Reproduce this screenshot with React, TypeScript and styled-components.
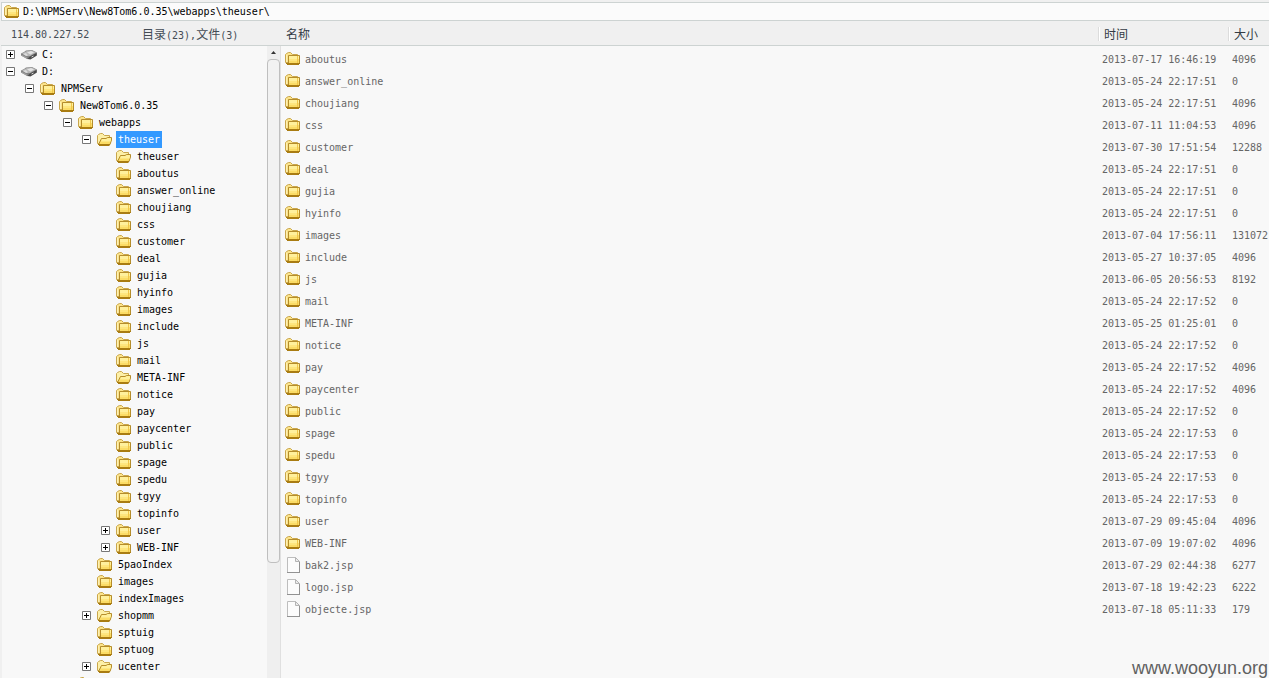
import React from 'react';
import styled, { createGlobalStyle } from 'styled-components';

const mono = `'DejaVu Sans Mono', 'Liberation Mono', 'Noto Sans CJK SC', monospace`;
const line = '#cdd3d2';

const GlobalStyle = createGlobalStyle`
  *, *::before, *::after { box-sizing: border-box; }
  body { margin: 0; background: #f0f0f0; font-family: ${mono}; font-size: 10px; }
  button, input { font: inherit; color: inherit; }
`;

const Page = styled.div`
  position: relative;
  display: flex;
  flex-direction: column;
  height: 100vh;
  padding: 2px 0 0 1px;
  overflow: hidden;
`;

const AddressBar = styled.label`
  display: flex;
  align-items: center;
  gap: 3px;
  flex: none;
  height: 19px;
  padding-left: 2px;
  background: #fbfbfb;
  border: 1px solid ${line};
  border-right: 0;
`;

const AddressInput = styled.input`
  flex: 1;
  min-width: 0;
  padding: 0;
  border: 0;
  outline: 0;
  background: transparent;
  color: #000;
`;

const Columns = styled.div`
  display: flex;
  flex: 1;
  min-height: 0;
`;

const Side = styled.section`
  display: flex;
  flex-direction: column;
  flex: none;
  width: 280px;
`;

const SideHeader = styled.header`
  display: grid;
  grid-template-columns: 131px 1fr;
  align-items: center;
  flex: none;
  height: 25px;
  padding: 2px 0 0 10px;
  color: #444c55;
  border-bottom: 1px solid ${line};
`;

const Han = styled.span`
  font-family: 'Noto Sans CJK SC', sans-serif;
  font-size: 12px;
  line-height: 16px;
`;

const SideBody = styled.div`
  display: flex;
  flex: 1;
  min-height: 0;
  margin-left: 1px;
  background: #f8f8f8;
  border-right: 1px solid #e0e0e0;
`;

const Tree = styled.ul`
  flex: 1;
  margin: 0;
  padding: 0;
  overflow: hidden;
  list-style: none;
`;

const TreeRow = styled.li<{ $level: number }>`
  display: flex;
  align-items: center;
  height: 17px;
  padding-left: ${(p) => 4 + p.$level * 19}px;
`;

const ToggleSlot = styled.span`
  display: flex;
  flex: none;
  width: 15px;
`;

const Toggle = styled.button`
  display: block;
  width: 9px;
  height: 9px;
  padding: 0;
  border: 0;
  background: none;
`;

const TreeLabel = styled.button<{ $selected?: boolean }>`
  height: 17px;
  margin-left: 3px;
  padding: 0 2px;
  border: 0;
  white-space: nowrap;
  background: ${(p) => (p.$selected ? '#3399ff' : 'transparent')};
  color: ${(p) => (p.$selected ? '#fff' : '#000')};
`;

const ScrollTrack = styled.div`
  display: flex;
  flex-direction: column;
  flex: none;
  width: 13px;
  background: #efefef;
`;

const ScrollUp = styled.button`
  display: flex;
  align-items: center;
  justify-content: center;
  flex: none;
  height: 13px;
  padding: 0;
  border: 0;
  background: none;
`;

const ScrollThumb = styled.div`
  flex: 504;
  background: #f2f2f2;
  border: 1px solid #bfbfbf;
  border-radius: 4px;
`;

const ScrollRest = styled.div`
  flex: 115;
`;

const Files = styled.main`
  flex: 1;
  min-width: 0;
  overflow: hidden;
  background: #f8f8f8;
`;

const Table = styled.table`
  width: 100%;
  table-layout: fixed;
  border-collapse: separate;
  border-spacing: 0;
  color: #666;

  tbody::before {
    content: '';
    display: block;
    height: 2px;
  }
`;

const HeadCell = styled.th<{ $width?: number }>`
  width: ${(p) => (p.$width ? `${p.$width}px` : 'auto')};
  height: 25px;
  padding: 2px 0 0;
  background: #f0f0f0;
  border-bottom: 1px solid ${line};
  color: #333b44;
  font-weight: 400;
  text-align: left;
`;

const HeadText = styled.div<{ $divided?: boolean }>`
  display: flex;
  align-items: center;
  height: 14px;
  padding-left: ${(p) => (p.$divided ? 6 : 5)}px;
  box-shadow: ${(p) => (p.$divided ? 'inset 1px 0 #dcdcdc, inset 2px 0 #fff' : 'none')};
`;

const Cell = styled.td`
  height: 22px;
  padding: 0 0 0 4px;
  white-space: nowrap;
`;

const FileName = styled.a`
  display: flex;
  align-items: center;
  gap: 4px;
  color: inherit;
  text-decoration: none;
`;

const Watermark = styled.div`
  position: absolute;
  right: 1px;
  bottom: 0;
  color: #606060;
  font-family: 'Liberation Sans', Arial, sans-serif;
  font-size: 18px;
  line-height: 20px;
`;

const Icon = styled.svg`
  display: block;
  flex: none;
`;

const FolderIcon = () => (
  <Icon width="16" height="16" viewBox="0 0 16 16" aria-hidden="true">
    <path d="M.5 11.5V3.5L1.5 2.500L3.500 1.500H5.500L7.500 3.500H12.500V11.5Z" fill="#fbe38a" stroke="#c9a64c" />
    <path d="M1.500 4V11" stroke="#fdf0b4" />
    <path d="M1 12.500H3" stroke="#a87b10" />
    <path d="M3.500 4.500H14.500V12.500H3.500Z" fill="#fbdc66" stroke="#b58d2c" />
    <path d="M4 5H14V8H4Z" fill="#fff09c" />
    <path d="M4 8H12V10H4Z" fill="#fee67e" />
    <path d="M12.500 5V12" stroke="#f0c64a" />
    <path d="M2 12.500H15M2 13.500H14" stroke="#a97c12" />
  </Icon>
);

const OpenFolderIcon = () => (
  <Icon width="16" height="16" viewBox="0 0 16 16" aria-hidden="true">
    <path d="M.5 11.5V3.500L1.500 2.500L3.500 1.500H5.500L7.500 3.500H12.500V11.5Z" fill="#fdf0a8" stroke="#c9a64c" />
    <path d="M1.500 12.500L4.500 6.500H9L10.500 5.500H14.500V8L13 12.500Z" fill="#fbdc66" stroke="#b58d2c" />
    <path d="M5 7H9.500L11 6H14V8L13.500 9.500H4Z" fill="#fff09c" />
    <path d="M1 12.500H13M2 13.500H12.500" stroke="#a97c12" />
  </Icon>
);

const DriveIcon = () => (
  <Icon width="16" height="16" viewBox="0 0 16 16" aria-hidden="true">
    <path d="M0 6.500L3 5L5 3.500L11 3L16 5.500V8.500L9.500 12.500L6 12L0 8.500Z" fill="#858585" />
    <path d="M1 6.500L4 5L6 4L11 3.500L15 5.500L9 9L6 8.800Z" fill="#b9b9b9" />
    <path d="M6 5.500L10 4L13 5.500L9.500 7.500Z" fill="#e4e4e4" />
    <path d="M2 7L5 6L7 8.500L5 9Z" fill="#dcdcdc" />
    <path d="M9 9.500L15.500 6V8.500L9.500 12.200L6.500 11.800Z" fill="#4a4a4a" />
    <path d="M1 8.500L6 11" stroke="#a6a6a6" />
    <path d="M10.500 10L12.500 9" stroke="#d8d8d8" />
  </Icon>
);

const FileIcon = () => (
  <Icon width="16" height="16" viewBox="0 0 16 16" aria-hidden="true">
    <path d="M2.500 .5H10.500L14.500 4.500V15.500H2.500Z" fill="#fcfcfc" stroke="#bdbdbd" />
    <path d="M10.500 .5V4.500H14.500Z" fill="#ececec" stroke="#b4b4b4" />
    <path d="M2 15.500H15M14.500 5V15" stroke="#929292" />
  </Icon>
);

const ToggleIcon = ({ open }: { open: boolean }) => (
  <Icon width="9" height="9" viewBox="0 0 9 9" aria-hidden="true">
    <path d="M.5 .5H8.500V8.500H.5Z" fill="#fff" stroke="#777" />
    <path d={open ? 'M2 4.500H7' : 'M2 4.500H7M4.500 2V7'} stroke="#000" />
  </Icon>
);

type Kind = 'drive' | 'closed' | 'open';
type Node = { name: string; level: number; kind?: Kind; toggle?: 'plus' | 'minus'; selected?: boolean };

const at = (level: number, names: string[]): Node[] => names.map((name) => ({ name, level }));

const nodes: Node[] = [
  { name: 'C:', level: 0, kind: 'drive', toggle: 'plus' },
  { name: 'D:', level: 0, kind: 'drive', toggle: 'minus' },
  { name: 'NPMServ', level: 1, toggle: 'minus' },
  { name: 'New8Tom6.0.35', level: 2, toggle: 'minus' },
  { name: 'webapps', level: 3, toggle: 'minus' },
  { name: 'theuser', level: 4, kind: 'open', toggle: 'minus', selected: true },
  { name: 'theuser', level: 5, kind: 'open' },
  ...at(5, ['aboutus', 'answer_online', 'choujiang', 'css', 'customer', 'deal', 'gujia', 'hyinfo', 'images', 'include', 'js', 'mail']),
  { name: 'META-INF', level: 5, kind: 'open' },
  ...at(5, ['notice', 'pay', 'paycenter', 'public', 'spage', 'spedu', 'tgyy', 'topinfo']),
  { name: 'user', level: 5, toggle: 'plus' },
  { name: 'WEB-INF', level: 5, toggle: 'plus' },
  ...at(4, ['5paoIndex', 'images', 'indexImages']),
  { name: 'shopmm', level: 4, kind: 'open', toggle: 'plus' },
  ...at(4, ['sptuig', 'sptuog']),
  { name: 'ucenter', level: 4, kind: 'open', toggle: 'plus' },
  { name: '', level: 3 },
];

const files: [string, string, string][] = [
  ['aboutus', '2013-07-17 16:46:19', '4096'],
  ['answer_online', '2013-05-24 22:17:51', '0'],
  ['choujiang', '2013-05-24 22:17:51', '4096'],
  ['css', '2013-07-11 11:04:53', '4096'],
  ['customer', '2013-07-30 17:51:54', '12288'],
  ['deal', '2013-05-24 22:17:51', '0'],
  ['gujia', '2013-05-24 22:17:51', '0'],
  ['hyinfo', '2013-05-24 22:17:51', '0'],
  ['images', '2013-07-04 17:56:11', '131072'],
  ['include', '2013-05-27 10:37:05', '4096'],
  ['js', '2013-06-05 20:56:53', '8192'],
  ['mail', '2013-05-24 22:17:52', '0'],
  ['META-INF', '2013-05-25 01:25:01', '0'],
  ['notice', '2013-05-24 22:17:52', '0'],
  ['pay', '2013-05-24 22:17:52', '4096'],
  ['paycenter', '2013-05-24 22:17:52', '4096'],
  ['public', '2013-05-24 22:17:52', '0'],
  ['spage', '2013-05-24 22:17:53', '0'],
  ['spedu', '2013-05-24 22:17:53', '0'],
  ['tgyy', '2013-05-24 22:17:53', '0'],
  ['topinfo', '2013-05-24 22:17:53', '0'],
  ['user', '2013-07-29 09:45:04', '4096'],
  ['WEB-INF', '2013-07-09 19:07:02', '4096'],
  ['bak2.jsp', '2013-07-29 02:44:38', '6277'],
  ['logo.jsp', '2013-07-18 19:42:23', '6222'],
  ['objecte.jsp', '2013-07-18 05:11:33', '179'],
];

const NodeIcon = ({ kind }: { kind?: Kind }) => {
  if (kind === 'drive') return <DriveIcon />;
  return kind === 'open' ? <OpenFolderIcon /> : <FolderIcon />;
};

export default function App() {
  return (
    <Page>
      <GlobalStyle />
      <AddressBar>
        <FolderIcon />
        <AddressInput
          type="text"
          aria-label="路径"
          defaultValue={'D:\\NPMServ\\New8Tom6.0.35\\webapps\\theuser\\'}
        />
      </AddressBar>
      <Columns>
        <Side>
          <SideHeader>
            <span>114.80.227.52</span>
            <span>
              <Han>目录</Han>(23),<Han>文件</Han>(3)
            </span>
          </SideHeader>
          <SideBody>
            <Tree>
              {nodes.map((node, i) => (
                <TreeRow key={i} $level={node.level}>
                  <ToggleSlot>
                    {node.toggle && (
                      <Toggle type="button" aria-label={node.name} aria-expanded={node.toggle === 'minus'}>
                        <ToggleIcon open={node.toggle === 'minus'} />
                      </Toggle>
                    )}
                  </ToggleSlot>
                  <NodeIcon kind={node.kind} />
                  {node.name && (
                    <TreeLabel type="button" $selected={node.selected}>
                      {node.name}
                    </TreeLabel>
                  )}
                </TreeRow>
              ))}
            </Tree>
            <ScrollTrack>
              <ScrollUp type="button" aria-label="向上滚动">
                <Icon width="5" height="3" viewBox="0 0 5 3" aria-hidden="true">
                  <path d="M0 3L2.500 0L5 3Z" fill="#333" />
                </Icon>
              </ScrollUp>
              <ScrollThumb />
              <ScrollRest />
            </ScrollTrack>
          </SideBody>
        </Side>
        <Files>
          <Table>
            <thead>
              <tr>
                <HeadCell>
                  <HeadText><Han>名称</Han></HeadText>
                </HeadCell>
                <HeadCell $width={130}>
                  <HeadText $divided><Han>时间</Han></HeadText>
                </HeadCell>
                <HeadCell $width={41}>
                  <HeadText $divided><Han>大小</Han></HeadText>
                </HeadCell>
              </tr>
            </thead>
            <tbody>
              {files.map(([name, time, size]) => (
                <tr key={name}>
                  <Cell>
                    <FileName href={`#${name}`}>
                      {name.endsWith('.jsp') ? <FileIcon /> : <FolderIcon />}
                      {name}
                    </FileName>
                  </Cell>
                  <Cell>{time}</Cell>
                  <Cell>{size}</Cell>
                </tr>
              ))}
            </tbody>
          </Table>
        </Files>
      </Columns>
      <Watermark>www.wooyun.org</Watermark>
    </Page>
  );
}
